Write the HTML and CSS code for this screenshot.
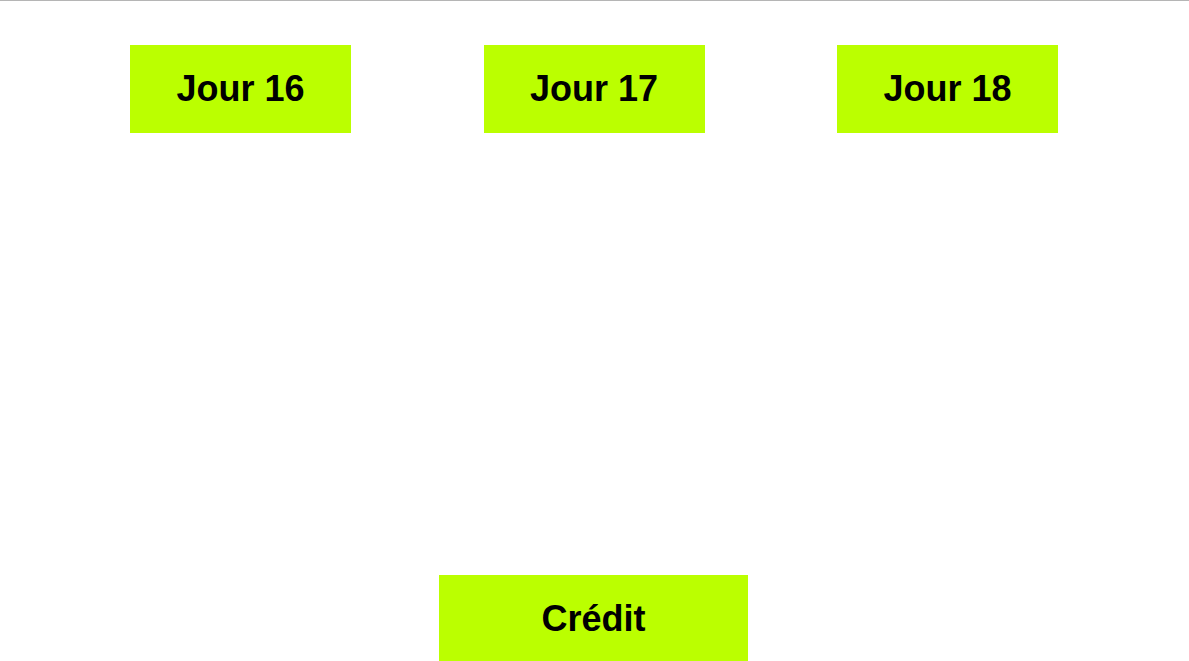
FILE: index.html
```html
<!DOCTYPE html>
<html lang="fr">
<head>
    <meta charset="UTF-8">
    <meta name="viewport" content="width=device-width, initial-scale=1.0">
    <title>Jours</title>
    <link rel="stylesheet" href="styles.css">
</head>
<body>
    <div class="jours">
        <a class="bouton jour" href="#jour16">Jour 16</a>
        <a class="bouton jour" href="#jour17">Jour 17</a>
        <a class="bouton jour" href="#jour18">Jour 18</a>
    </div>

    <div class="bas">
        <a class="bouton credit" href="#credit">Crédit</a>
    </div>
</body>
</html>
```

FILE: styles.css
```css
body {
    margin: 0;
    border-top: 1px solid #b5b5b5;
    background-color: #fff;
    font-family: "Liberation Sans", Arial, sans-serif;
}
.jours {
    display: flex;
    justify-content: center;
    gap: 132.5px;
    padding-top: 44px;
    padding-right: 1px;
}
.bouton {
    display: block;
    box-sizing: border-box;
    background-color: #bbff00;
    color: #000;
    text-decoration: none;
    text-align: center;
    font-size: 36px;
    font-weight: bold;
    line-height: 40px;
    padding: 24px 0;
}
.jour {
    width: 221px;
}
.bas {
    display: flex;
    justify-content: center;
    margin-top: 442px;
    padding-right: 2px;
}
.credit {
    width: 309px;
}
```
